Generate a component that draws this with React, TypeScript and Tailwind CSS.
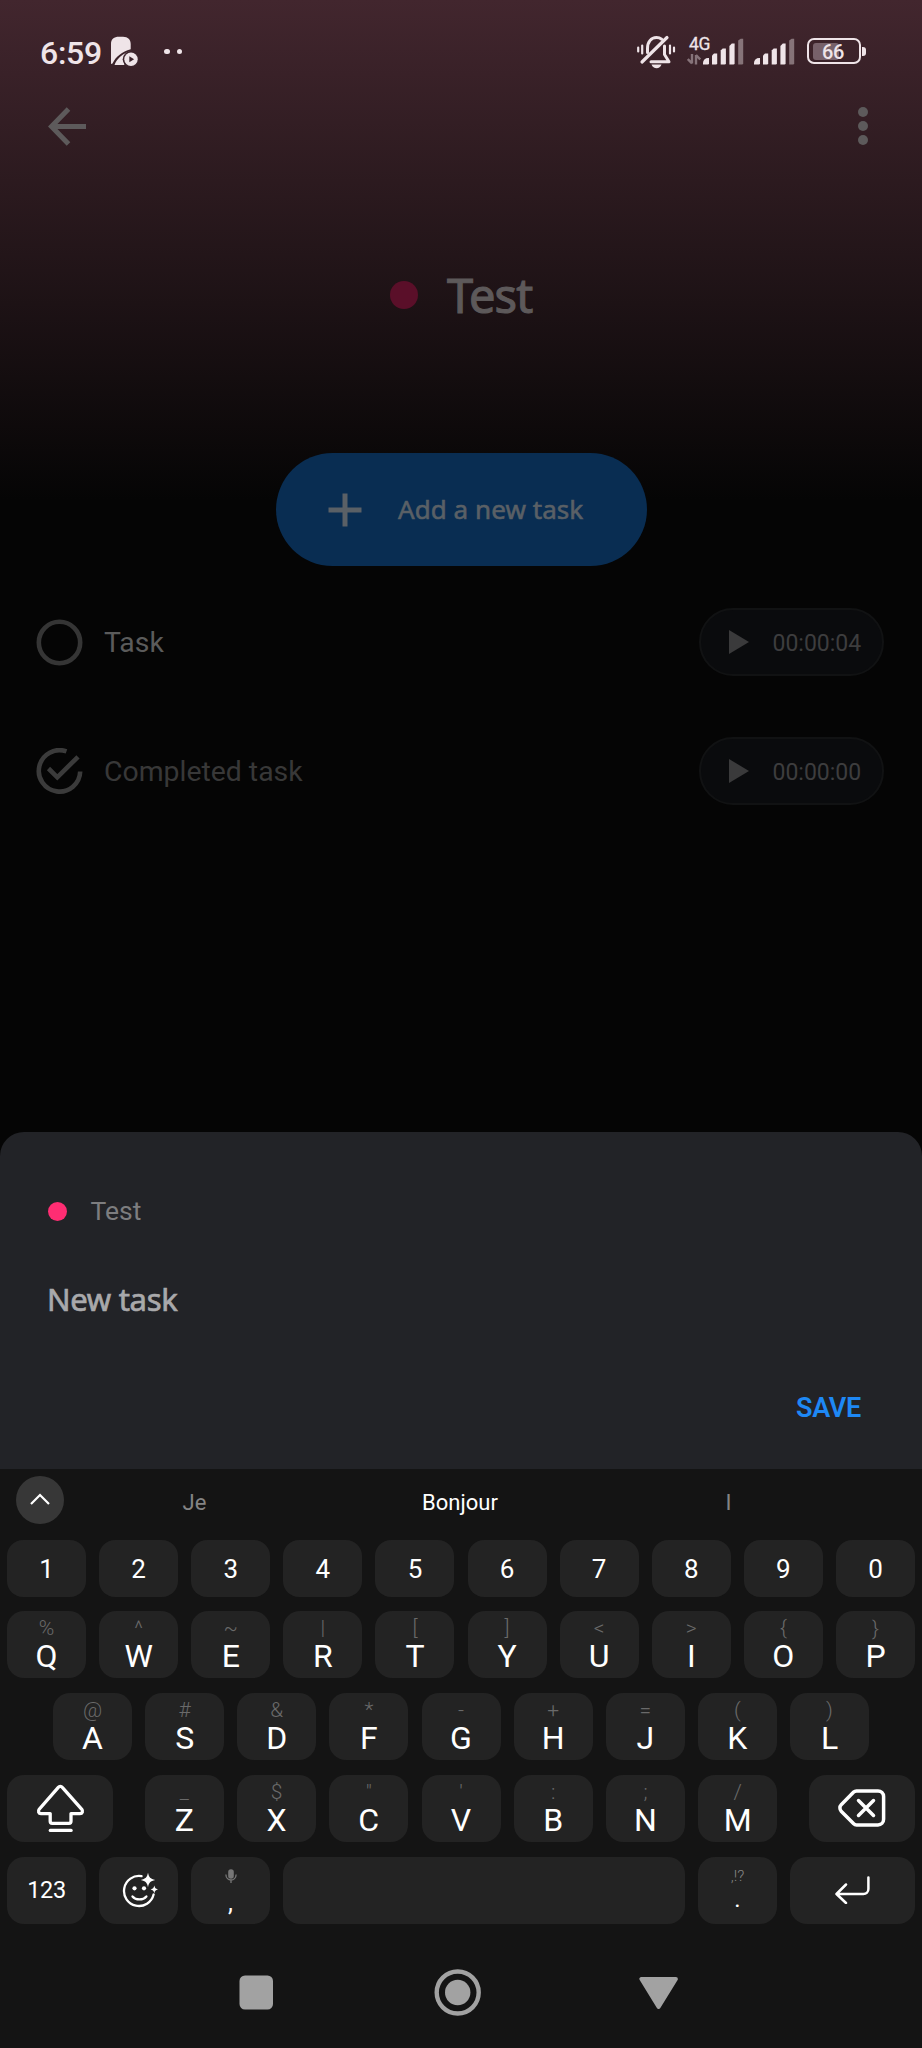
import React from "react";

const ROBOTO = "font-['Roboto',sans-serif]";
const NOTO = "font-['Noto_Sans',sans-serif]";

function SignalBars() {
  return (
    <svg width="41" height="27" viewBox="0 0 41 27" fill="#efe4e8">
      <path d="M0 26.500v-1.500a5 5 0 0 1 5-5h1v5.200a1.300 1.300 0 0 1-1.300 1.300z" />
      <path d="M9 17.500l2-2h3.200v9.700a1.300 1.300 0 0 1-1.300 1.300H9z" />
      <path d="M17.700 12.500l2-2h3.200v14.700a1.300 1.300 0 0 1-1.300 1.300h-3.900z" />
      <path d="M26.400 8l2.400-2.500h2.800v19.700a1.300 1.300 0 0 1-1.300 1.300h-3.900z" />
      <path d="M35.200 2.500l2.500-1.800h2.500v24.500a1.300 1.300 0 0 1-1.300 1.300h-3.700z" opacity=".42" />
    </svg>
  );
}

function StatusBar() {
  return (
    <div className="flex h-[100px] shrink-0 items-start justify-between pl-[40px] pr-[56px] text-[#efe4e8]">
      <div className="flex items-start">
        <span className="mt-[37px] w-[71px] text-[32px] font-medium leading-none tracking-[-0.3px]">6:59</span>
        <svg className="mt-[36px]" width="28" height="31" viewBox="0 0 28 31" fill="#efe4e8">
          <path d="M0 28V8C0 3 3 .7 8 .7h4c5 0 7.700 3 7.700 7v5.500C11 16 5 20 1.500 27.500z" />
          <path d="M3.500 29C6 22 12 17.500 20.500 14.500C15 17 11.500 22 13.500 29z" />
          <circle cx="20" cy="23.300" r="8.300" fill="#3c242c" />
          <circle cx="20" cy="23.300" r="6.700" />
          <path d="M18.300 20.300v6l4.800-3z" fill="#3c242c" />
        </svg>
        <div className="ml-[25px] mt-[48.500px] flex gap-[7px]">
          <i className="size-[5.500px] rounded-full bg-[#efe4e8]" />
          <i className="size-[5.500px] rounded-full bg-[#efe4e8]" />
        </div>
      </div>
      <div className="flex items-start">
        <svg className="mt-[35px]" width="39" height="34" viewBox="0 0 39 34" fill="none" stroke="#efe4e8" strokeLinecap="round">
          <path d="M1.200 12.500v4M5.200 10.500v8M37 12.500v4M33 10.500v8" strokeWidth="2.200" />
          <path d="M10.500 17.500V13.500C10.500 7 14 2.600 19.500 2.600c2 0 3.800.6 5.200 1.600M27.500 11v8.500l4.500 7.300H14" strokeWidth="3" strokeLinejoin="round" />
          <path d="M30 2.500L5 27" strokeWidth="3.200" />
          <path d="M14.500 29.500h10c-1 2.500-2.600 3.700-4.900 3.700s-4.100-1.200-5.100-3.700z" fill="#efe4e8" stroke="none" />
        </svg>
        <div className="ml-[11px] mt-[35px] flex w-[16px] flex-col">
          <span className="ml-[2px] text-[17.500px] leading-[18px] tracking-[-0.3px] [-webkit-text-stroke:0.3px]">4G</span>
          <svg className="mt-[1px]" width="14" height="11" viewBox="0 0 14 11" stroke="#efe4e8" strokeWidth="2.400" fill="none" opacity=".42">
            <path d="M5 0v9.500M5 9.500L.8 5M9 10.500V1M9 1l4.200 4.500" />
          </svg>
        </div>
        <div className="mt-[38px] flex gap-[10px]">
          <SignalBars />
          <SignalBars />
        </div>
        <div className="ml-[12px] mt-[38px] flex items-center">
          <div className="flex h-[26px] w-[54px] items-center rounded-[7px] border-2 border-[#efe4e8] pl-[4px]">
            <div className="flex h-[17px] w-[26px] items-center rounded-[3px] bg-[#77616a] pl-[9px]">
              <span className="mt-[1px] text-[20px] font-medium leading-none tracking-[-0.3px]">66</span>
            </div>
          </div>
          <i className="ml-px h-[9px] w-[4px] rounded-r-[3px] bg-[#efe4e8]" />
        </div>
      </div>
    </div>
  );
}

function TopBar() {
  return (
    <div className="flex h-[52px] shrink-0 items-center justify-between pl-[48px] pr-[54px]">
      <svg width="39" height="40" viewBox="0 0 39 40" fill="none" stroke="#5d5a5b" strokeWidth="5">
        <path d="M38 20.500H4M20.500 3L3.500 20.500l17 17.500" />
      </svg>
      <div className="flex flex-col gap-[4.200px]">
        <i className="size-[10px] rounded-full bg-[#5d5a5b]" />
        <i className="size-[10px] rounded-full bg-[#5d5a5b]" />
        <i className="size-[10px] rounded-full bg-[#5d5a5b]" />
      </div>
    </div>
  );
}

function TaskRow({ name, time, done }: { name: string; time: string; done?: boolean }) {
  return (
    <div className="flex h-[68px] items-center justify-between pl-[36px] pr-[38px]">
      <div className="flex items-center">
        <svg width="47" height="47" viewBox="0 0 47 47" fill="none" stroke={done ? "#3b3b3b" : "#353535"} strokeWidth="4.600">
          {done ? (
            <path d="M30.500 3.400A20.700 20.700 0 1 0 44.200 23.500M12.500 20.500l8.800 8.800L42 8.800" />
          ) : (
            <circle cx="23.500" cy="23.500" r="20.700" />
          )}
        </svg>
        <span className={done ? "ml-[21px] pt-[3px] text-[28.400px] leading-none text-[#383838]" : "ml-[21px] pt-[3px] text-[28.400px] leading-none text-[#5b5b5b]"}>
          {name}
        </span>
      </div>
      <div className="flex h-[68px] w-[185px] items-center rounded-full border-2 border-[#111213] bg-[#0a0b0d] pl-[28px] text-[#3d3d3e]">
        <svg width="20" height="24" viewBox="0 0 20 24" fill="#3a3a3b">
          <path d="M0 0v24l20-12z" />
        </svg>
        <span className="ml-[23.500px] pt-[2px] text-[23px] leading-none">{time}</span>
      </div>
    </div>
  );
}

const KEY = "flex h-[67.500px] rounded-[17px] bg-[#232323] text-white";

function LetterKey({ label, hint }: { label: string; hint: string }) {
  return (
    <div className={KEY + " w-[79px] flex-col items-center pt-[7px]"}>
      <span className="text-[21px] font-light leading-none text-[#6a6a6a]">{hint}</span>
      <span className="mt-[1px] text-[32px] leading-none">{label}</span>
    </div>
  );
}

const ROW_1 = [["Q", "%"], ["W", "^"], ["E", "~"], ["R", "|"], ["T", "["], ["Y", "]"], ["U", "<"], ["I", ">"], ["O", "{"], ["P", "}"]];
const ROW_2 = [["A", "@"], ["S", "#"], ["D", "&"], ["F", "*"], ["G", "-"], ["H", "+"], ["J", "="], ["K", "("], ["L", ")"]];
const ROW_3 = [["Z", "_"], ["X", "$"], ["C", "\""], ["V", "'"], ["B", ":"], ["N", ";"], ["M", "/"]];

function Keyboard() {
  return (
    <div className="flex h-[579px] shrink-0 flex-col bg-[#141414]">
      <div className="flex h-[70.500px] items-start pl-[16px] pt-[7px]">
        <div className="flex size-[48px] items-center justify-center rounded-full bg-[#373737]">
          <svg width="20" height="12" viewBox="0 0 20 12" fill="none" stroke="#fff" strokeWidth="2.200" className="mb-[2px]">
            <path d="M1 11l9-9 9 9" />
          </svg>
        </div>
        <div className="flex pt-[16px] text-center text-[22px] leading-none">
          <span className="ml-[-2px] w-[265px] text-[#848484]">Je</span>
          <span className="w-[266px] text-white">Bonjour</span>
          <span className="w-[271px] text-[#848484]">I</span>
        </div>
      </div>
      <div className="flex flex-col gap-[14.400px]">
        <div className="flex justify-between px-[7px]">
          {"1234567890".split("").map((d) => (
            <div key={d} className="flex h-[57px] w-[79px] items-center justify-center rounded-[16px] bg-[#232323] pt-[1px] text-[26px] leading-none text-white">
              {d}
            </div>
          ))}
        </div>
        <div className="flex justify-between px-[7px]">
          {ROW_1.map(([l, h]) => <LetterKey key={l} label={l} hint={h} />)}
        </div>
        <div className="flex justify-between px-[53px]">
          {ROW_2.map(([l, h]) => <LetterKey key={l} label={l} hint={h} />)}
        </div>
        <div className="flex justify-between px-[7px]">
          <div className={KEY + " w-[106px] items-center justify-center"}>
            <svg width="49" height="49" viewBox="0 0 49 49" fill="none" stroke="#fff" strokeWidth="3.300" strokeLinecap="round" strokeLinejoin="round">
              <path d="M22.300 3.300a2.600 2.600 0 0 1 4 0L45.800 25.300c1.500 1.800.6 4.300-1.800 4.300H35v7.700a2 2 0 0 1-2 2H16.200a2 2 0 0 1-2-2v-7.700H5c-2.400 0-3.300-2.500-1.800-4.300z" />
              <path d="M14.300 46.400h20.800" />
            </svg>
          </div>
          <div className="flex w-[632.500px] justify-between">
            {ROW_3.map(([l, h]) => <LetterKey key={l} label={l} hint={h} />)}
          </div>
          <div className={KEY + " w-[106px] items-center justify-center"}>
            <svg className="mb-[1px]" width="48" height="38" viewBox="0 0 48 38" fill="none" stroke="#fff" strokeWidth="3.500" strokeLinecap="round" strokeLinejoin="round">
              <path d="M18.500 1.900H40a5.600 5.600 0 0 1 5.600 5.600v22.800a5.600 5.600 0 0 1-5.600 5.600H18.500a4 4 0 0 1-2.800-1.200L3.200 22.200c-1.700-1.700-1.700-4.700 0-6.400L15.700 3.100a4 4 0 0 1 2.800-1.200z" />
              <path d="M20.500 11.500l15 15M35.500 11.500l-15 15" />
            </svg>
          </div>
        </div>
        <div className="flex justify-between px-[7px]">
          <div className={KEY + " w-[79px] items-center justify-center text-[23.500px] leading-none tracking-[-0.400px]"}>123</div>
          <div className={KEY + " w-[79px] items-center justify-center"}>
            <svg className="ml-[2px]" width="36" height="36" viewBox="0 0 36 36" fill="none" stroke="#fff" strokeWidth="2.300" strokeLinecap="round">
              <path d="M19.500 4.200A15 15 0 1 0 31.600 22.500" />
              <path d="M10.500 24.500c3.200 3.900 10.700 3.900 13.900 0" />
              <circle cx="12.500" cy="16.300" r="2.100" fill="#fff" stroke="none" />
              <circle cx="22" cy="16.300" r="2.100" fill="#fff" stroke="none" />
              <path d="M26 .8c1 4.600 2.300 6 7.200 7.200c-4.900 1.200-6.200 2.600-7.200 7.200c-1-4.600-2.300-6-7.200-7.200c4.900-1.200 6.200-2.600 7.200-7.200z" fill="#fff" stroke="none" />
              <path d="M32.300 13.600c.6 2.600 1.200 3.200 3.700 3.900c-2.500.7-3.100 1.300-3.700 3.900c-.6-2.600-1.200-3.200-3.700-3.900c2.500-.7 3.100-1.300 3.700-3.900z" fill="#fff" stroke="none" />
            </svg>
          </div>
          <div className={KEY + " w-[79px] flex-col items-center pt-[12px]"}>
            <svg width="12" height="14" viewBox="0 0 12 14" fill="none" stroke="#777" strokeWidth="1.300">
              <rect x="3.200" y="0.300" width="5.600" height="9.500" rx="2.800" fill="#777" stroke="none" />
              <path d="M.9 5.500c0 7.300 10.200 7.300 10.200 0M6 11v3" />
            </svg>
            <span className="mt-[7px] text-[25px] leading-none">,</span>
          </div>
          <div className={KEY + " w-[402px]"} />
          <div className={KEY + " w-[79px] flex-col items-center pt-[12px]"}>
            <span className="text-[15.500px] font-light leading-[14px] text-[#858585]">,!?</span>
            <span className="mt-[4px] text-[24px] leading-none">.</span>
          </div>
          <div className={KEY + " w-[125px] items-center justify-center"}>
            <svg width="35" height="28" viewBox="0 0 35 28" fill="none" stroke="#fff" strokeWidth="2.500" strokeLinecap="round" strokeLinejoin="round">
              <path d="M33.400 1.500V13a5 5 0 0 1-5 5H2M11 8.500L1.500 18l9.500 9" />
            </svg>
          </div>
        </div>
      </div>
      <div className="flex flex-1 items-start pl-[239px] pt-[45px]">
        <svg className="mt-[6px]" width="35" height="35" viewBox="0 0 35 35" fill="#a2a2a2">
          <rect x=".5" y=".5" width="33.500" height="34" rx="5.500" />
        </svg>
        <svg className="ml-[160px]" width="48" height="48" viewBox="0 0 48 48">
          <circle cx="23.700" cy="23.500" r="21" fill="none" stroke="#a2a2a2" strokeWidth="4.400" />
          <circle cx="23.700" cy="23.500" r="12.700" fill="#a2a2a2" />
        </svg>
        <svg className="ml-[157px] mt-[8px]" width="40" height="33" viewBox="0 0 40 33" fill="#a2a2a2" stroke="#a2a2a2" strokeWidth="4" strokeLinejoin="round">
          <path d="M2.400 2h34.500L19.600 30z" />
        </svg>
      </div>
    </div>
  );
}

export default function App() {
  return (
    <div className={ROBOTO + " flex h-[2048px] w-[922px] flex-col overflow-hidden bg-[#050505]"}>
      <div className="flex h-[1132px] shrink-0 flex-col bg-[linear-gradient(to_bottom,#42262e_0px,#050505_500px)]">
        <StatusBar />
        <TopBar />
        <div className={NOTO + " flex h-[301px] items-start pl-[390px] pt-[119px]"}>
          <i className="mt-[10px] size-[28px] rounded-full bg-[#5a0f29]" />
          <span className="ml-[29px] mt-[1px] text-[47px] leading-none tracking-[-0.900px] text-[#5d595a] [-webkit-text-stroke:1.100px]">Test</span>
        </div>
        <div className="ml-[276px] flex h-[113px] w-[371px] items-center rounded-full bg-[#092d52] pl-[52px]">
          <svg width="34" height="34" viewBox="0 0 34 34" stroke="#5a6066" strokeWidth="5">
            <path d="M.5 17h33M17 .5v33" />
          </svg>
          <span className={NOTO + " mb-[2px] ml-[36px] text-[26px] leading-none tracking-[0.060px] text-[#5a6066] [-webkit-text-stroke:0.600px]"}>Add a new task</span>
        </div>
        <div className="mt-[42px] flex flex-col gap-[61px]">
          <TaskRow name="Task" time="00:00:04" />
          <TaskRow name="Completed task" time="00:00:00" done />
        </div>
      </div>
      <div className="flex h-[337px] shrink-0 flex-col rounded-t-[24px] bg-[#222327]">
        <div className="flex h-[93px] items-end pl-[48px]">
          <i className="mb-[4px] size-[19px] rounded-full bg-[#ff2d73]" />
          <span className="mb-[1px] ml-[23.500px] text-[26.500px] leading-[27px] text-[#7d7d7f]">Test</span>
        </div>
        <span className={NOTO + " pl-[47px] pt-[59px] text-[31px] leading-none tracking-[-0.300px] text-[#a9a9ab] [-webkit-text-stroke:0.700px]"}>New task</span>
        <span className="self-end pr-[61px] pt-[80px] text-[27px] font-semibold leading-[27px] tracking-[-0.300px] text-[#1e88f5]">SAVE</span>
      </div>
      <Keyboard />
    </div>
  );
}
